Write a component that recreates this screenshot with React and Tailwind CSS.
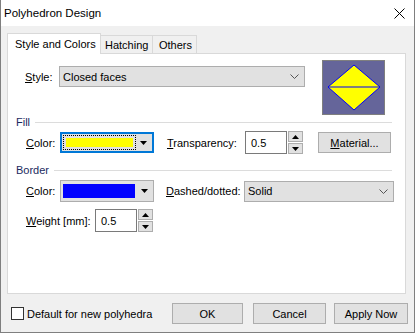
import React from "react";

const Chevron = () => (
  <svg width="9" height="5" viewBox="0 0 9 5" className="shrink-0">
    <path d="M0.5 0.5 L4.5 4.5 L8.5 0.5" fill="none" stroke="#555" strokeWidth="1" />
  </svg>
);

const SmallArrow = ({ up }) => (
  <svg width="7" height="4" viewBox="0 0 7 4">
    <path d={up ? "M0 4 L3.5 0 L7 4 Z" : "M0 0 L7 0 L3.5 4 Z"} fill="#000" />
  </svg>
);

const Spin = ({ value }) => (
  <div className="flex h-[23px]">
    <div className="w-[42px] h-full border border-[#7a7a7a] bg-white flex items-center pl-[5px]">{value}</div>
    <div className="flex flex-col gap-px ml-px">
      <div className="w-[15px] h-[11px] border border-[#adadad] bg-[#e1e1e1] flex items-center justify-center">
        <SmallArrow up />
      </div>
      <div className="w-[15px] h-[11px] border border-[#adadad] bg-[#e1e1e1] flex items-center justify-center">
        <SmallArrow />
      </div>
    </div>
  </div>
);

const Header = ({ label }) => (
  <div className="flex items-center h-[14px] pl-[8px] pr-[13px] text-[#1b2a5e]">
    <span>{label}</span>
    <div className="flex-1 h-px bg-[#dcdcdc] ml-[5px]" />
  </div>
);

export default function App() {
  return (
    <div className="w-[415px] h-[333px] bg-[#f0f0f0] border-x border-b border-[#7f7f7f] flex flex-col text-[11px] leading-[14px] whitespace-nowrap text-black font-['Liberation_Sans',Arial,sans-serif] overflow-hidden">
      {/* title bar */}
      <div className="h-[26px] bg-white flex items-center justify-between pl-[3px] pr-[9px] shrink-0 text-[11.5px]">
        <span>Polyhedron Design</span>
        <svg width="11" height="11" viewBox="0 0 11 11">
          <path d="M0.5 0.5 L10.5 10.5 M10.5 0.5 L0.5 10.5" stroke="#000" strokeWidth="1" />
        </svg>
      </div>

      {/* tabs */}
      <div className="flex items-end ml-[6px] mt-[7px] -mb-px relative z-10">
        <div className="w-[94px] h-[21px] bg-white border-x border-t border-[#d9d9d9] flex items-center pl-[7px] pb-[1px]">Style and Colors</div>
        <div className="w-[52px] h-[19px] border-t border-r border-b border-[#d9d9d9] flex items-center pl-[4px]">Hatching</div>
        <div className="w-[44px] h-[19px] border-t border-r border-b border-[#d9d9d9] flex items-center pl-[6px]">Others</div>
      </div>

      {/* panel */}
      <div className="ml-[6px] w-[399px] h-[241px] bg-white border border-[#d9d9d9] flex flex-col">
        {/* style row */}
        <div className="flex items-start pt-[6px] pl-[17px]">
          <div className="w-[34px] h-[21px] mt-[6px] flex items-center">
            <span><span className="underline">S</span>tyle:</span>
          </div>
          <div className="w-[246px] h-[21px] mt-[6px] border border-[#adadad] bg-[#e1e1e1] flex items-center justify-between pl-[3px] pr-[5px]">
            <span>Closed faces</span>
            <Chevron />
          </div>
          <div className="ml-[17px] w-[63px] h-[55px] border border-[#7f7f7f] bg-[#65659a]">
            <svg width="61" height="53" viewBox="0 0 61 53">
              <path d="M5 26 L31 4 L57 26 L31 49 Z" fill="#ffff00" stroke="#0000ff" strokeWidth="1" />
              <path d="M5 26 L57 26" stroke="#0000ff" strokeWidth="1.2" />
            </svg>
          </div>
        </div>

        <Header label="Fill" />

        {/* fill color row */}
        <div className="flex items-center h-[23px] mt-[2px] pl-[18px]">
          <div className="w-[34px]">
            <span className="underline">C</span>olor:
          </div>
          <div className="w-[94px] h-[21px] border-2 border-[#0078d7] bg-[#e1e1e1] flex items-center p-px">
            <div className="flex-1 h-full border border-dotted border-black p-[2px]">
              <div className="w-full h-full bg-[#ffff00]" />
            </div>
            <div className="w-[15px] flex items-center justify-center">
              <SmallArrow />
            </div>
          </div>
          <div className="ml-[13px] w-[78px]">
            <span className="underline">T</span>ransparency:
          </div>
          <Spin value="0.5" />
          <div className="ml-[15px] w-[73px] h-[21px] border border-[#adadad] bg-[#e1e1e1] flex items-center justify-center">
            <span><span className="underline">M</span>aterial...</span>
          </div>
        </div>

        <div className="mt-[9px]">
          <Header label="Border" />
        </div>

        {/* border color row */}
        <div className="flex items-center h-[22px] mt-[3px] pl-[18px]">
          <div className="w-[34px]">
            <span className="underline">C</span>olor:
          </div>
          <div className="w-[94px] h-[22px] border border-[#adadad] bg-[#e1e1e1] flex items-center pl-[2px] py-[3px]">
            <div className="w-[72px] h-full bg-[#0000ff]" />
            <div className="flex-1 flex items-center justify-center">
              <SmallArrow />
            </div>
          </div>
          <div className="ml-[12px] w-[78px]">
            <span className="underline">D</span>ashed/dotted:
          </div>
          <div className="w-[150px] h-[21px] border border-[#adadad] bg-[#e1e1e1] flex items-center justify-between pl-[3px] pr-[5px]">
            <span>Solid</span>
            <Chevron />
          </div>
        </div>

        {/* weight row */}
        <div className="flex items-center mt-[7px] pl-[18px]">
          <div className="w-[69px]">
            <span className="underline">W</span>eight [mm]:
          </div>
          <Spin value="0.5" />
        </div>
      </div>

      {/* footer */}
      <div className="flex items-center h-[21px] mt-[9px] pl-[10px]">
        <div className="w-[13px] h-[13px] border border-[#333] bg-white" />
        <span className="ml-[3px]">Default for new polyhedra</span>
        <div className="ml-auto flex items-center mr-[6px]">
          <div className="w-[71px] h-[21px] border border-[#adadad] bg-[#e1e1e1] flex items-center justify-center">OK</div>
          <div className="ml-[10px] w-[73px] h-[21px] border border-[#adadad] bg-[#e1e1e1] flex items-center justify-center">Cancel</div>
          <div className="ml-[8px] w-[74px] h-[21px] border border-[#adadad] bg-[#e1e1e1] flex items-center justify-center">Apply Now</div>
        </div>
      </div>
    </div>
  );
}
